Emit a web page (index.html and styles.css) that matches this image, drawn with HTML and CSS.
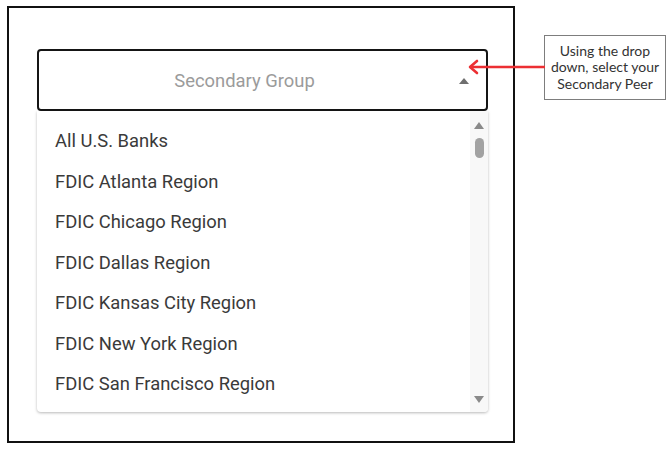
FILE: index.html
```html
<!DOCTYPE html>
<html lang="en">
<head>
<meta charset="utf-8">
<title>Secondary Group</title>
<link rel="stylesheet" href="styles.css">
</head>
<body>
<div class="stage">
  <div class="frame">
    <div class="select">
      <div class="field">
        <span class="placeholder">Secondary Group</span>
        <span class="caret"></span>
      </div>
      <div class="menu">
        <ul class="options">
          <li>All U.S. Banks</li>
          <li>FDIC Atlanta Region</li>
          <li>FDIC Chicago Region</li>
          <li>FDIC Dallas Region</li>
          <li>FDIC Kansas City Region</li>
          <li>FDIC New York Region</li>
          <li>FDIC San Francisco Region</li>
        </ul>
        <div class="scrollbar">
          <span class="sb-up"></span>
          <span class="sb-thumb"></span>
          <span class="sb-down"></span>
        </div>
      </div>
    </div>
  </div>
  <div class="note">Using the drop down, select your Secondary Peer</div>
  <svg class="arrow" width="80" height="18" viewBox="0 0 80 18" aria-hidden="true">
    <path d="M4 9 H79" stroke="#ec2f33" stroke-width="2.5" fill="none"/>
    <path d="M11 3 L4 9 L11 15" stroke="#ec2f33" stroke-width="2.6" fill="none" stroke-linecap="round" stroke-linejoin="round"/>
  </svg>
</div>
</body>
</html>
```

FILE: styles.css
```css
html, body {
  margin: 0;
  padding: 0;
  background: #ffffff;
}

.stage {
  position: relative;
  display: flex;
  align-items: flex-start;
  padding: 6px 0 0 7px;
  width: 670px;
  height: 453px;
  box-sizing: border-box;
}

.frame {
  box-sizing: border-box;
  width: 508px;
  height: 437px;
  border: 2px solid #111111;
  padding: 41px 0 0 28px;
}

.select {
  width: 451px;
  font-family: Roboto, "Liberation Sans", sans-serif;
}

.field {
  box-sizing: border-box;
  height: 62px;
  border: 2px solid #151515;
  border-radius: 4px;
  display: flex;
  align-items: center;
  padding-right: 17px;
}

.placeholder {
  flex: 1;
  text-align: center;
  font-size: 18.4px;
  color: #9b9b9b;
}

.caret {
  width: 0;
  height: 0;
  margin-left: 9px;
  margin-top: 1px;
  border-left: 5px solid transparent;
  border-right: 5px solid transparent;
  border-bottom: 6px solid #6f6f6f;
}

.menu {
  height: 301px;
  display: flex;
  background: #ffffff;
  border-radius: 0 0 4px 4px;
  box-shadow: 0 1px 3px rgba(0, 0, 0, 0.28);
  overflow: hidden;
}

.options {
  flex: 1;
  list-style: none;
  margin: 0;
  padding: 10px 0 0 18px;
}

.options li {
  height: 40.5px;
  line-height: 40.5px;
  font-size: 18.4px;
  color: #3a3a3a;
  white-space: nowrap;
}

.scrollbar {
  width: 18px;
  background: #f8f8f8;
  display: flex;
  flex-direction: column;
  align-items: center;
  padding-top: 11px;
  box-sizing: border-box;
}

.sb-up {
  width: 0;
  height: 0;
  border-left: 5px solid transparent;
  border-right: 5px solid transparent;
  border-bottom: 7px solid #8a8a8a;
}

.sb-thumb {
  width: 9px;
  height: 20px;
  margin-top: 9px;
  border-radius: 5px;
  background: #a2a2a2;
}

.sb-down {
  width: 0;
  height: 0;
  margin-top: auto;
  margin-bottom: 9px;
  border-left: 5px solid transparent;
  border-right: 5px solid transparent;
  border-top: 7px solid #8a8a8a;
}

.note {
  box-sizing: border-box;
  width: 122px;
  height: 65px;
  margin: 29px 0 0 29px;
  border: 1px solid #7d7d7d;
  display: flex;
  align-items: center;
  justify-content: center;
  text-align: center;
  padding: 0 4px;
  font-family: Lato, "Open Sans", sans-serif;
  font-size: 14px;
  line-height: 16.5px;
  color: #333333;
}

.arrow {
  position: absolute;
  left: 466px;
  top: 58px;
}
```
